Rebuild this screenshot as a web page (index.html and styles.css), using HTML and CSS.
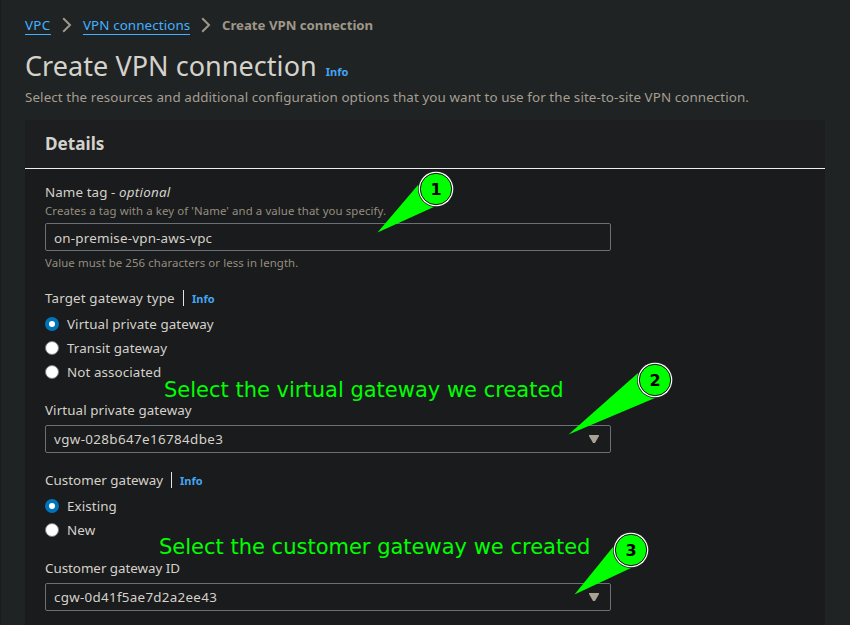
FILE: index.html
```html
<!DOCTYPE html>
<html lang="en">
<head>
<meta charset="utf-8">
<title>Create VPN connection</title>
<link rel="stylesheet" href="styles.css">
</head>
<body>
<main class="page">
  <nav class="crumbs">
    <a class="c-vpc"><span class="t">VPC</span></a>
    <svg class="chev" viewBox="0 0 10 16"><path d="M1.2 1.3 8 8l-6.8 6.7"/></svg>
    <a class="c-conn"><span class="t">VPN connections</span></a>
    <svg class="chev" viewBox="0 0 10 16"><path d="M1.2 1.3 8 8l-6.8 6.7"/></svg>
    <b class="c-here">Create VPN connection</b>
  </nav>
  <header class="title"><h1>Create VPN connection</h1><a class="info">Info</a></header>
  <p class="desc">Select the resources and additional configuration options that you want to use for the site-to-site VPN connection.</p>
  <section class="panel">
    <h2>Details</h2>
    <form class="fields">
      <div class="label">Name tag - <i>optional</i></div>
      <div class="hint">Creates a tag with a key of 'Name' and a value that you specify.</div>
      <div class="box name">on-premise-vpn-aws-vpc</div>
      <div class="hint below">Value must be 256 characters or less in length.</div>
      <div class="label group"><span class="divided target">Target gateway type</span><a class="info">Info</a></div>
      <div class="radio"><span class="dot on"></span><span>Virtual private gateway</span></div>
      <div class="radio"><span class="dot"></span><span>Transit gateway</span></div>
      <div class="radio"><span class="dot"></span><span>Not associated</span></div>
      <div class="label select-label">Virtual private gateway</div>
      <div class="box vgw"><span>vgw-028b647e16784dbe3</span><svg class="arrow" viewBox="0 0 10 8"><path d="M0 0h10v1L6 8H4L0 1z"/></svg></div>
      <div class="label group second"><span class="divided customer">Customer gateway</span><a class="info">Info</a></div>
      <div class="radio"><span class="dot on"></span><span>Existing</span></div>
      <div class="radio"><span class="dot"></span><span>New</span></div>
      <div class="label select-label cid">Customer gateway ID</div>
      <div class="box cgw"><span>cgw-0d41f5ae7d2a2ee43</span><svg class="arrow" viewBox="0 0 10 8"><path d="M0 0h10v1L6 8H4L0 1z"/></svg></div>
    </form>
  </section>
</main>
<div class="note note-v">Select the virtual gateway we created</div>
<div class="note note-c">Select the customer gateway we created</div>
<svg class="marks" viewBox="0 0 850 625">
  <path class="beam" d="M377.500 232.500 418 185 436 206z"/>
  <path class="beam" d="M568.500 434.500 638 373 655 398z"/>
  <path class="beam" d="M574.500 594.500 613 547 631 568z"/>
  <g transform="translate(436 189)"><circle class="outer" r="18"/><circle class="ring" r="17.3"/><circle class="inner" r="15.700"/><text y="6">1</text></g>
  <g transform="translate(655 380)"><circle class="outer" r="18"/><circle class="ring" r="17.3"/><circle class="inner" r="15.700"/><text y="6">2</text></g>
  <g transform="translate(631 550)"><circle class="outer" r="18"/><circle class="ring" r="17.3"/><circle class="inner" r="15.700"/><text y="6">3</text></g>
</svg>
</body>
</html>
```
FILE: styles.css
```css
* { box-sizing: border-box; }
body { margin: 0; width: 850px; height: 625px; overflow: hidden; position: relative; background: #1f2324; color: #d5d1cb; font: 13.4px/20px "Noto Sans", sans-serif; letter-spacing: 0.09px; }
.page { height: 625px; padding: 15px 25px 0 24px; border-left: 1px solid #171c27; overflow: hidden; }
.crumbs { display: flex; align-items: center; height: 20px; color: #9f9789; white-space: nowrap; }
.crumbs a { color: #44b0ff; height: 20px; border-bottom: 1px solid #44b0ff; }
.c-vpc { width: 26px; letter-spacing: 0.3px; }
.c-conn { width: 107px; }
.crumbs b { font-size: 13.2px; font-weight: 700; letter-spacing: 0; }
.chev { width: 10px; height: 16px; margin: 0 11px; fill: none; stroke: #9f9789; stroke-width: 2; }
.title { display: flex; align-items: baseline; height: 36px; margin-top: 13px; }
h1 { margin: 0; font-size: 27px; line-height: 36px; font-weight: 400; letter-spacing: 0.05px; white-space: nowrap; }
.info { color: #44a5f5; font-size: 11px; font-weight: 700; letter-spacing: 0; margin-left: 9px; }
.desc { margin: 3px 0 0; height: 20px; color: #a69e91; white-space: nowrap; }
.panel { width: 800px; height: 505px; margin-top: 13px; background: #191b1c; }
h2 { margin: 0; height: 49px; padding-left: 20px; font-size: 17.2px; line-height: 47px; font-weight: 700; letter-spacing: 0; background: #1c1e1f; border-bottom: 1px solid #eceeee; }
.fields { padding: 13px 20px 0; }
.label { height: 20px; white-space: nowrap; }
.label i { letter-spacing: 0.22px; }
.hint { height: 16px; font-size: 11.4px; line-height: 16px; letter-spacing: 0.1px; color: #968d80; margin-top: 1px; white-space: nowrap; }
.box { display: flex; align-items: center; justify-content: space-between; width: 566px; height: 28px; padding: 0 11px 1px 8px; border: 1px solid #687078; border-radius: 2px; }
.name { margin-top: 4px; padding: 1px 11px 0 8px; letter-spacing: 0.2px; }
.vgw { letter-spacing: 0.36px; }
.cgw { letter-spacing: 0.28px; }
.below { margin-top: 4px; }
.group { display: flex; align-items: center; margin-top: 17px; }
.divided { border-right: 1px solid #e2e4e4; height: 16px; line-height: 16px; padding-right: 8px; }
.target { width: 139px; letter-spacing: 0.14px; }
.customer { width: 127px; letter-spacing: 0.02px; }
.cid { letter-spacing: -0.04px; }
.group .info { margin-left: 8px; line-height: 20px; padding-top: 2px; }
.radio { display: flex; align-items: center; gap: 8px; height: 24px; white-space: nowrap; }
.group + .radio { margin-top: 4px; }
.dot { width: 14px; height: 14px; border: 1px solid #777; border-radius: 50%; background: #fff; }
.dot.on { border: 4px solid #0073bb; }
.select-label { margin-top: 16px; }
.select-label + .box { margin-top: 5px; }
.arrow { width: 10px; height: 8px; fill: #aaa195; }
.note { position: absolute; font: 21px/26px "DejaVu Sans", sans-serif; letter-spacing: 0; color: #0f0; white-space: nowrap; }
.note-v { left: 164px; top: 377px; }
.note-c { left: 159px; top: 534px; }
.marks { position: absolute; left: 0; top: 0; width: 850px; height: 625px; }
.beam { fill: #0f0; }
.outer { fill: #222; }
.ring { fill: #fff; }
.inner { fill: #0f0; stroke: #111; stroke-width: 1; }
.marks text { font: bold 16px "DejaVu Sans", sans-serif; letter-spacing: 0; text-anchor: middle; fill: #000; }
```
